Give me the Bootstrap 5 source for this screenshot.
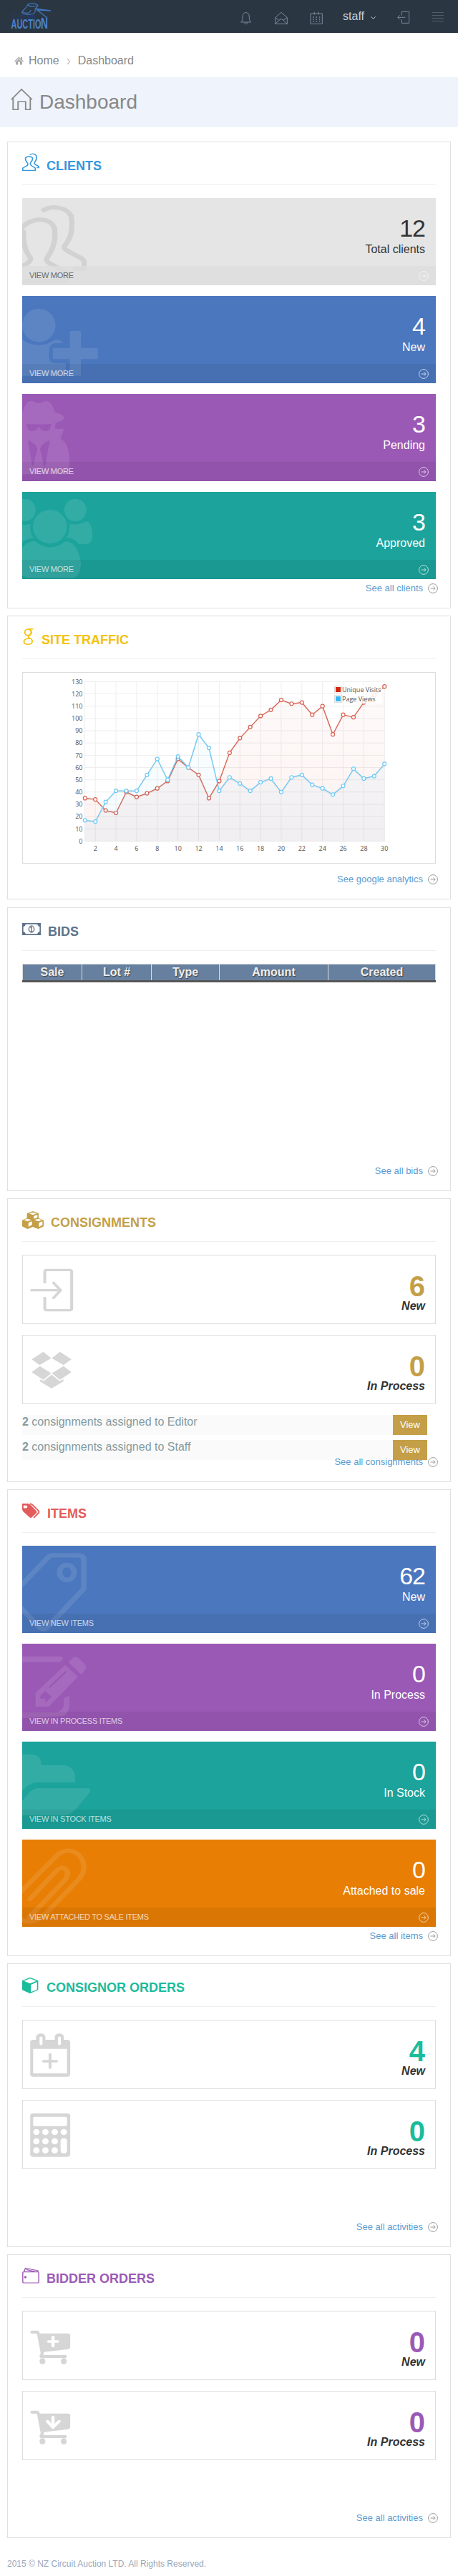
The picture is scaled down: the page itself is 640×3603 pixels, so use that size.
<!DOCTYPE html>
<html lang="en">
<head>
<meta charset="utf-8">
<meta name="viewport" content="width=device-width, initial-scale=1">
<title>Dashboard</title>
<link href="https://cdn.jsdelivr.net/npm/bootstrap@5.3.0/dist/css/bootstrap.min.css" rel="stylesheet">
<style>
body{font-family:"Liberation Sans",Arial,sans-serif;font-size:16px;color:#333;background:#fff}
a{text-decoration:none}
svg{display:block;flex:none}
.topbar{height:46px;background:#2b3643}
.topbar .ic{fill:none;stroke:#7a899c;stroke-width:3;width:20px;height:46px}
.staff{color:#c6cfda;line-height:46px}
.crumbs{height:62px;padding:27px 0 0 20px;color:#888;line-height:24px}
.titlebar{height:70px;background:#eff3fb;color:#888;padding-left:15px;margin-bottom:20px}
.titlebar h1{font-size:28px;line-height:32px;margin:19px 0 0 9px;font-weight:400}
.panel{height:397px;margin:0 10px 10px;border:1px solid #e0e0e0;padding:0 20px}
.panel-tall{height:653px}
.heading{height:60px;border-bottom:1px solid #eee;padding-top:14px;gap:10px}
.heading svg{height:30px}
.heading h2{font-size:18px;line-height:20px;font-weight:700;margin:9px 0 0}
.content{flex:1 1 0;min-height:0;padding-top:18px;gap:15px}
.see{height:39px;flex:none;padding-top:4px;margin-right:-3px;gap:7px;font-size:13px;line-height:16px;color:#5b9bd1;z-index:1}
.see svg{color:#999}
.tile{height:122px;color:#fff;flex:none}
.tile .art{position:absolute;left:0;top:0;width:120px;height:122px;fill:#fff;stroke:#fff;stroke-width:0;opacity:.1}
.tile .num{font-size:34px;line-height:34px;letter-spacing:-1px;padding:25px 15px 0 0}
.tile .lab{line-height:20px;padding:3px 15px 0 0;height:36px}
.tile .more{height:27px;line-height:27px;font-size:11px;letter-spacing:-.27px;padding:0 10px;background:rgba(0,0,0,.06)}
.tile .more>*{opacity:.7}
.blue{background:#4b77be}.purple{background:#9b59b6}.teal{background:#1ba39c}.orange{background:#e87e04}
.gray{background:#e5e5e5;color:#333}
.gray .art{fill:#000;stroke:#000;opacity:.08}
.gray .more{background:rgba(221,221,221,.8)}
.gray .more svg{color:#fff}
.box{height:97px;border:1px solid #ddd;flex:none}
.box svg{width:100px;height:95px;fill:#d6d6d6;stroke:#d6d6d6;stroke-width:0}
.box .num{font-size:40px;line-height:40px;font-weight:700;padding:23px 14px 0 0}
.box .lab{line-height:20px;font-weight:700;font-style:italic;margin-top:-2px;padding-right:14px}
.assign{height:28px;margin-bottom:7px;color:#859ba0}
.assign span{background:#fafafa;line-height:20px;flex:1}
.assign .view{width:48px;margin-right:12px;background:#c49f47;color:#fff;font-size:13px;line-height:27px;text-align:center}
.bids th{height:23px;background:#67809f;color:#eee;text-align:center;line-height:22px;padding:0;border-left:1px solid #ddd;text-shadow:1px 1px 1px #444}
.bids{border-top:1px solid #ddd;border-right:1px solid #ddd;border-bottom:3px solid #555;table-layout:fixed;margin:0}
.chart{height:268px;border:1px solid #ddd}
.chart text{font:9px "Open Sans",sans-serif;fill:#545454}
.copy{font-size:12px;line-height:20px;color:#98a6ba;padding:16px 0 0 10px;height:43px}
</style>
</head>
<body>
<svg width="0" height="0" class="position-absolute">
<symbol id="go" viewBox="0 0 14 14"><g fill="none" stroke="currentColor"><circle cx="7" cy="7" r="6.4"/><path d="M3.5 7H10M7.5 4.3 10.2 7 7.5 9.7"/></g></symbol>
</svg>

<header class="topbar d-flex align-items-start">
  <svg width="75" height="46" viewBox="0 0 75 46" class="me-auto">
    <text x="17" y="27" font-family="Liberation Serif" font-style="italic" font-size="12" fill="#1f3d78">Circuit</text>
    <g fill="none" stroke="#4173b5" stroke-width="1.2"><path d="M39 6C44 4 52 5 53 8L49 13C50 17 48 20 43 20C36 21 29 19 31 16C33 13 36 13 39 6ZM39 6C40 10 48 9 53 8M31 16C34 19 42 20 43 14"/><path d="M49 12 71 15 52 14 66 25" stroke-width="1.5"/></g>
    <text x="15.500" y="40" font-family="Liberation Sans" font-weight="700" font-size="17.500" fill="#4b82cc" textLength="42" lengthAdjust="spacingAndGlyphs">AUCTIO</text>
    <text x="57" y="40" font-family="Liberation Sans" font-weight="700" font-size="22" fill="#4b82cc" textLength="10" lengthAdjust="spacingAndGlyphs">N</text>
  </svg>
  <svg class="ic" viewBox="24 -18 60 138"><path d="M32 75C40 68 39 62 39 51Q40 35 53 35T67 51C67 62 66 68 74 75ZM46 76Q53 90 60 76"/></svg>
  <svg class="ic" viewBox="171 -18 60 138" style="margin-left:29px"><path d="M176 56 201 34 226 56V82H176ZM176 56 192 67 201 61 210 67 226 56M176 82 192 67M226 82 210 67"/></svg>
  <svg class="ic" viewBox="318 -18 60 138" style="margin-left:29px"><path d="M324 39H373V82H324ZM340 32V44M357 32V44"/><path d="M333 54H365M333 63H365M333 72H365" stroke-width="4" stroke-dasharray="5 8"/></svg>
  <span class="staff" style="margin-left:27px">staff</span>
  <svg width="8" height="46" viewBox="576 -18 24 138" style="margin-left:9px"><path d="M578 52 587 61 596 52" fill="none" stroke="#c6cfda" stroke-width="3"/></svg>
  <svg class="ic" viewBox="687 -18 60 138" style="margin-left:28px"><path d="M709 47V31H740V79H709V64M724 55H692M701 46 692 55 701 64"/></svg>
  <svg width="16" height="46" viewBox="0 0 16 46" style="margin:0 20px 0 30px"><path d="M0 17.500H16M0 21.500H16M0 25.500H16M0 29.500H16" stroke="#515e6d"/></svg>
</header>

<nav class="crumbs d-flex">
  <svg width="14" height="24" viewBox="0 0 14 24" style="margin-right:6px"><path d="M0 12.500 6.500 6.500 9 9V7H11V10.500L13 12.500 12 13.500 6.500 8.500 1 13.500ZM2 13.500 6.500 9.500 11 13.500V17.500H8V13.500H5V17.500H2Z" fill="#aaa"/></svg>
  <span>Home</span>
  <svg width="6" height="24" viewBox="0 0 6 24" style="margin:0 10px"><path d="M1 9 4.500 13 1 17" fill="none" stroke="#999"/></svg>
  <span>Dashboard</span>
</nav>
<div class="titlebar d-flex">
  <svg width="31" height="70" viewBox="36 324 76 210" preserveAspectRatio="none"><path d="M38 418 73 375 109 418M44 412V460H61V427H87V460H103V412" fill="none" stroke="#888" stroke-width="4.500"/></svg>
  <h1>Dashboard</h1>
</div>

<section class="panel panel-tall d-flex flex-column">
  <div class="heading d-flex" style="color:#3598dc">
    <svg width="24" viewBox="76 641 59 90" preserveAspectRatio="none"><g fill="none" stroke="currentColor" stroke-width="4"><path d="M78 717V707L93 697Q98 692 93 684C83 668 86 659 99 659C113 659 116 668 105 684Q102 692 108 697L121 707V717Z"/><path d="M102 652C112 644 127 646 125 667Q124 677 118 685Q117 690 122 693L133 700V706H126"/></g></svg>
    <h2>CLIENTS</h2>
  </div>
  <div class="content d-flex flex-column">
    <div class="tile gray position-relative text-end overflow-hidden">
      <svg class="art" viewBox="76 51 294 366" preserveAspectRatio="none"><g fill="none" stroke-width="18"><path d="M144 106C175 78 225 88 243 125Q247 140 246 160C246 205 238 225 222 250C215 262 225 268 235 275L280 305Q288 312 288 322V348H250"/><path d="M66 190C95 130 175 125 187 180C190 220 188 250 165 295C155 312 160 318 170 325L220 358Q230 365 230 380Q230 400 220 400H66M80 185C80 240 85 270 102 297C112 315 95 325 70 341"/></g></svg>
      <div class="num">12</div><div class="lab">Total clients</div>
      <div class="more d-flex align-items-center justify-content-between position-relative"><span>VIEW MORE</span><svg width="14" height="14"><use href="#go"/></svg></div>
    </div>
    <div class="tile blue position-relative text-end overflow-hidden">
      <svg class="art" viewBox="76 462 294 366" preserveAspectRatio="none"><ellipse cx="133" cy="585" rx="57" ry="70"/><path d="M76 645Q133 692 190 645Q205 645 218 660H190Q168 662 168 690V720Q168 745 190 745H225V797H76Z"/><path d="M243 609H273Q277 609 277 614V681H331Q335 681 335 686V722Q335 727 331 727H277V797H239V727H185Q181 727 181 722V686Q181 681 185 681H239V614Q239 609 243 609"/></svg>
      <div class="num">4</div><div class="lab">New</div>
      <div class="more d-flex align-items-center justify-content-between position-relative"><span>VIEW MORE</span><svg width="14" height="14"><use href="#go"/></svg></div>
    </div>
    <div class="tile purple position-relative text-end overflow-hidden">
      <svg class="art" viewBox="76 33 294 366" preserveAspectRatio="none"><path fill-rule="evenodd" d="M76 115C85 80 92 63 107 63C120 63 120 72 133 72S147 63 160 63C175 66 183 90 188 112C205 115 219 122 219 134C219 143 205 150 190 152Q190 165 188 180H219L207 221C232 235 238 280 238 320V370H76ZM90 158Q133 163 176 158Q174 190 155 189Q142 190 133 168Q125 190 112 189Q92 190 90 158ZM95 228Q125 240 128 265L112 340ZM171 228Q140 240 137 265L153 345Z"/></svg>
      <div class="num">3</div><div class="lab">Pending</div>
      <div class="more d-flex align-items-center justify-content-between position-relative"><span>VIEW MORE</span><svg width="14" height="14"><use href="#go"/></svg></div>
    </div>
    <div class="tile teal position-relative text-end overflow-hidden">
      <svg class="art" viewBox="76 444 294 366" preserveAspectRatio="none"><ellipse cx="85" cy="520" rx="37" ry="47"/><ellipse cx="258" cy="520" rx="38" ry="47"/><ellipse cx="171" cy="590" rx="58" ry="71"/><path d="M76 680Q95 648 120 651Q171 702 225 651C265 655 275 720 277 745Q275 800 250 805H92L76 795ZM76 582Q90 582 105 578Q100 610 115 638Q90 640 76 655ZM238 578Q270 585 298 567C312 575 316 600 316 635Q312 663 295 663H270Q255 638 228 636Q240 610 238 578Z"/></svg>
      <div class="num">3</div><div class="lab">Approved</div>
      <div class="more d-flex align-items-center justify-content-between position-relative"><span>VIEW MORE</span><svg width="14" height="14"><use href="#go"/></svg></div>
    </div>
  </div>
  <a class="see d-flex justify-content-end">See all clients<svg width="14" height="14" style="margin-top:1px"><use href="#go"/></svg></a>
</section>

<section class="panel d-flex flex-column">
  <div class="heading d-flex" style="color:#f4c20d">
    <svg width="17" viewBox="76 48 42 90" preserveAspectRatio="none"><g fill="none" stroke="currentColor" stroke-width="4.500"><ellipse cx="96" cy="73" rx="11" ry="13"/><path d="M97 59H114M104 61Q114 74 101 86Q93 91 101 97Q111 102 111 111Q110 124 96 124T82 111Q83 99 103 99"/></g></svg>
    <h2>SITE TRAFFIC</h2>
  </div>
  <div class="content">
    <div class="chart"><svg id="plot" width="576" height="266" viewBox="32 941 576 266"></svg></div>
  </div>
  <a class="see d-flex justify-content-end">See google analytics<svg width="14" height="14" style="margin-top:1px"><use href="#go"/></svg></a>
</section>

<section class="panel d-flex flex-column" style="margin-top:11px">
  <div class="heading d-flex" style="color:#5e738b">
    <svg width="26" viewBox="76 132 64 90" preserveAspectRatio="none"><path fill="currentColor" fill-rule="evenodd" d="M76 153H140V204H76ZM88 158Q87 166 80 169V188Q87 191 88 199H128Q129 191 136 188V169Q129 166 128 158Z"/><ellipse cx="108" cy="178.500" rx="9" ry="14" fill="none" stroke="currentColor" stroke-width="3.500"/><path d="M104 173 108 169V188M104 188H112" fill="none" stroke="currentColor" stroke-width="3.500"/></svg>
    <h2>BIDS</h2>
  </div>
  <div class="content">
    <table class="bids w-100">
      <thead><tr><th style="width:83px">Sale</th><th style="width:97px">Lot #</th><th style="width:95px">Type</th><th style="width:152px">Amount</th><th>Created</th></tr></thead>
    </table>
  </div>
  <a class="see d-flex justify-content-end">See all bids<svg width="14" height="14" style="margin-top:1px"><use href="#go"/></svg></a>
</section>

<section class="panel d-flex flex-column">
  <div class="heading d-flex" style="color:#c49f47">
    <svg width="30" viewBox="76 213 72 90" preserveAspectRatio="none"><path fill="currentColor" d="M112 222 131 231V251L148 260V286L130 297 112 288 94 297 76 286V260L92 251V231Z"/><path fill="#fff" d="M112 227 125 232 112 238 99 232ZM127 237V249L115 254V242ZM94 254 107 259 94 265 81 259ZM109 265V279L97 288V271ZM130 254 143 259 130 265 117 259ZM144 265V280L132 289V271Z"/></svg>
    <h2>CONSIGNMENTS</h2>
  </div>
  <div class="content d-flex flex-column">
    <div class="box d-flex justify-content-between text-end">
      <svg viewBox="78 408 245 285" preserveAspectRatio="none"><path fill="none" stroke-width="10" d="M153 525V475Q153 469 160 469H238Q245 469 245 477V630Q245 638 238 638H160Q153 638 153 630V582"/><path fill="none" stroke-width="10" stroke-linecap="round" d="M108 554H205M183 523 207 554 183 586"/></svg>
      <div><div class="num" style="color:#c49f47">6</div><div class="lab">New</div></div>
    </div>
    <div class="box d-flex justify-content-between text-end">
      <svg viewBox="78 744 245 285" preserveAspectRatio="none"><path d="M108 844 148 812 175 839 135 868ZM244 844 205 812 177 839 217 868ZM108 898 136 872 175 902 148 930ZM244 898 217 872 177 902 205 930ZM136 928 149 935 176 908 204 935 217 928V936L176 966 136 936Z"/></svg>
      <div><div class="num" style="color:#c49f47">0</div><div class="lab">In Process</div></div>
    </div>
    <div>
      <div class="assign d-flex"><span><b>2</b> consignments assigned to Editor</span><a class="view">View</a></div>
      <div class="assign d-flex"><span><b>2</b> consignments assigned to Staff</span><a class="view">View</a></div>
    </div>
  </div>
  <a class="see d-flex justify-content-end">See all consignments<svg width="14" height="14" style="margin-top:1px"><use href="#go"/></svg></a>
</section>

<section class="panel panel-tall d-flex flex-column">
  <div class="heading d-flex" style="color:#e35b5a">
    <svg width="25" viewBox="76 114 62 90" preserveAspectRatio="none"><path fill="currentColor" fill-rule="evenodd" d="M76 129H96Q102 130 106 136L126 161Q128 165 126 168L108 188Q105 190 102 187L79 162Q76 158 76 150ZM87 137A5 6 0 1 0 87 148A5 6 0 1 0 87 137Z"/><path fill="none" stroke="currentColor" stroke-width="5" d="M103 130Q109 130 113 136L133 160Q135 165 133 168L116 189"/></svg>
    <h2>ITEMS</h2>
  </div>
  <div class="content d-flex flex-column">
    <div class="tile blue position-relative text-end overflow-hidden">
      <svg class="art" viewBox="76 306 294 366" preserveAspectRatio="none"><path fill="none" stroke-width="19" d="M66 480 165 355Q170 346 180 346H270Q287 348 287 365V480Q287 488 280 495L165 645Q148 665 132 645L66 560"/><ellipse cx="229" cy="418" rx="25" ry="31" fill="none" stroke-width="19"/></svg>
      <div class="num">62</div><div class="lab">New</div>
      <div class="more d-flex align-items-center justify-content-between position-relative"><span>VIEW NEW ITEMS</span><svg width="14" height="14"><use href="#go"/></svg></div>
    </div>
    <div class="tile purple position-relative text-end overflow-hidden">
      <svg class="art" viewBox="76 717 294 366" preserveAspectRatio="none"><path fill-rule="evenodd" d="M76 770H200Q215 772 216 779L206 795H76ZM223 806 267 856 167 981H122V923ZM155 915 177 940 155 965V948H138V936ZM167 897 225 830 228 837 171 903ZM234 794 252 774Q260 768 268 776L292 805Q297 815 292 825L278 847ZM219 945 238 935V965Q238 1000 220 1020L76 1030V1005H190Q219 1000 219 965Z"/></svg>
      <div class="num">0</div><div class="lab">In Process</div>
      <div class="more d-flex align-items-center justify-content-between position-relative"><span>VIEW IN PROCESS ITEMS</span><svg width="14" height="14"><use href="#go"/></svg></div>
    </div>
    <div class="tile teal position-relative text-end overflow-hidden">
      <svg class="art" viewBox="76 108 294 366" preserveAspectRatio="none"><path d="M76 161H105Q140 161 142 207H218Q255 212 257 255V279H130Q100 280 76 315ZM76 358Q105 303 132 303H300Q313 305 308 320L262 388Q240 420 215 418H76Z"/></svg>
      <div class="num">0</div><div class="lab">In Stock</div>
      <div class="more d-flex align-items-center justify-content-between position-relative"><span>VIEW IN STOCK ITEMS</span><svg width="14" height="14"><use href="#go"/></svg></div>
    </div>
    <div class="tile orange position-relative text-end overflow-hidden">
      <svg class="art" viewBox="76 519 294 366" preserveAspectRatio="none"><path fill="none" stroke-width="18" stroke-linecap="round" d="M66 745 195 585C230 545 288 570 287 640Q285 665 270 685L150 838Q110 880 66 850M103 768 192 652Q208 630 224 642Q238 660 225 685L100 845"/></svg>
      <div class="num">0</div><div class="lab">Attached to sale</div>
      <div class="more d-flex align-items-center justify-content-between position-relative"><span>VIEW ATTACHED TO SALE ITEMS</span><svg width="14" height="14"><use href="#go"/></svg></div>
    </div>
  </div>
  <a class="see d-flex justify-content-end">See all items<svg width="14" height="14" style="margin-top:1px"><use href="#go"/></svg></a>
</section>

<section class="panel d-flex flex-column">
  <div class="heading d-flex" style="color:#1bbc9b">
    <svg width="24" viewBox="76 93 59 90" preserveAspectRatio="none"><path fill="currentColor" fill-rule="evenodd" d="M103 107 131 121V160L103 175 76 160V121ZM103 112 82 122 103 133 125 122ZM127 127 106 138V169L127 158Z"/></svg>
    <h2>CONSIGNOR ORDERS</h2>
  </div>
  <div class="content d-flex flex-column">
    <div class="box d-flex justify-content-between text-end">
      <svg viewBox="78 289 245 285" preserveAspectRatio="none"><path fill-rule="evenodd" d="M112 370H123V357C125 339 154 339 155 357V370H187V357C189 339 217 339 218 357V370H230Q240 371 240 382V513Q240 525 230 525H112Q103 524 103 513V382Q103 371 112 370ZM113 408V511H229V408ZM135 360V389Q140 397 145 389V360Q140 353 135 360ZM198 360V389Q203 397 208 389V360Q203 353 198 360Z"/><path stroke-width="10" stroke-linecap="round" d="M149 460H193M171 431V487"/></svg>
      <div><div class="num" style="color:#1bbc9b">4</div><div class="lab">New</div></div>
    </div>
    <div class="box d-flex justify-content-between text-end">
      <svg viewBox="78 625 245 285" preserveAspectRatio="none"><rect x="103" y="679" width="137" height="182" rx="10"/><g fill="#fff"><rect x="113" y="693" width="116" height="39" rx="5"/><ellipse cx="124" cy="757" rx="11" ry="13"/><ellipse cx="155" cy="757" rx="11" ry="13"/><ellipse cx="187" cy="757" rx="11" ry="13"/><ellipse cx="218" cy="757" rx="11" ry="13"/><ellipse cx="124" cy="796" rx="11" ry="13"/><ellipse cx="155" cy="796" rx="11" ry="13"/><ellipse cx="187" cy="796" rx="11" ry="13"/><ellipse cx="124" cy="834" rx="11" ry="13"/><ellipse cx="155" cy="834" rx="11" ry="13"/><ellipse cx="187" cy="834" rx="11" ry="13"/><rect x="207" y="783" width="22" height="64" rx="11"/></g></svg>
      <div><div class="num" style="color:#1bbc9b">0</div><div class="lab">In Process</div></div>
    </div>
  </div>
  <a class="see d-flex justify-content-end">See all activities<svg width="14" height="14" style="margin-top:1px"><use href="#go"/></svg></a>
</section>

<section class="panel d-flex flex-column">
  <div class="heading d-flex" style="color:#9b59b6">
    <svg width="24" viewBox="76 204 59 90" preserveAspectRatio="none"><g fill="none" stroke="currentColor" stroke-width="3.500"><rect x="78" y="233" width="55" height="46" rx="4"/><path d="M82 232 87 217 130 228V233M90 223 120 232"/></g><ellipse cx="87" cy="255" rx="4" ry="5" fill="currentColor"/></svg>
    <h2>BIDDER ORDERS</h2>
  </div>
  <div class="content d-flex flex-column">
    <div class="box d-flex justify-content-between text-end">
      <svg viewBox="78 400 245 285" preserveAspectRatio="none"><g id="cart"><path d="M109 480H128Q134 481 136 492H233Q240 493 240 500V547Q240 556 233 558L150 570 148 583H224Q229 584 229 589T224 595H140Q134 594 135 586L139 575 126 493H109Q103 492 103 487T109 480Z"/><ellipse cx="145" cy="609" rx="10" ry="13"/><ellipse cx="218" cy="609" rx="10" ry="13"/></g><path d="M166 526H197M181 507V545" stroke="#fff" stroke-width="11" stroke-linecap="round"/></svg>
      <div><div class="num" style="color:#9b59b6">0</div><div class="lab">New</div></div>
    </div>
    <div class="box d-flex justify-content-between text-end">
      <svg viewBox="78 400 245 285" preserveAspectRatio="none"><use href="#cart"/><path d="M181 507V550M162 525 181 550 202 525" fill="none" stroke="#fff" stroke-width="11" stroke-linecap="round"/></svg>
      <div><div class="num" style="color:#9b59b6">0</div><div class="lab">In Process</div></div>
    </div>
  </div>
  <a class="see d-flex justify-content-end">See all activities<svg width="14" height="14" style="margin-top:1px"><use href="#go"/></svg></a>
</section>

<footer class="copy">2015 © NZ Circuit Auction LTD. All Rights Reserved.</footer>

<script src="https://cdn.jsdelivr.net/npm/bootstrap@5.3.0/dist/js/bootstrap.bundle.min.js"></script>
<script>
// Daily traffic, day 1 to day 30
const visits=[35,34,25,23,40,36,39,43,49,67,60,54,35,49,72,84,93,102,107,115,112,113,103,110,87,103,101,113,119,126];
const views=[17,16,32,41,41,41,54,67,50,69,60,87,76,41,52,47,41,48,51,40,52,54,46,43,38,45,59,51,53,63];
const X=d=>118.8+(d-1)*14.43, Y=v=>1176.5-v*1.7165;
let s='<defs><linearGradient id="rg" x1="0" y1="0" x2="0" y2="1"><stop offset="0" stop-color="#d12610" stop-opacity=".02"/><stop offset="1" stop-color="#d12610" stop-opacity=".06"/></linearGradient><linearGradient id="bg" x1="0" y1="0" x2="0" y2="1"><stop offset="0" stop-color="#37b7f3" stop-opacity=".03"/><stop offset="1" stop-color="#37b7f3" stop-opacity=".06"/></linearGradient></defs>';
for(let v=0;v<=130;v+=10)s+=`<path d="M118 ${Y(v)}H538" stroke="#eee"/><text x="115.500" y="${Y(v)+3.3}" text-anchor="end">${v}</text>`;
for(let d=2;d<=30;d+=2)s+=`<path d="M${X(d)} 953V1177" stroke="#eee"/><text x="${X(d)}" y="1190" text-anchor="middle">${d}</text>`;
s+='<path d="M118.500 953V1177" stroke="#eee"/>';
for(const [data,c,g] of [[visits,'#d9604f','rg'],[views,'#6cc9f5','bg']]){
  const p=data.map((v,i)=>X(i+1).toFixed(1)+' '+Y(v).toFixed(1));
  s+=`<path d="M${X(1)} ${Y(0)}L${p.join('L')}V${Y(0)}Z" fill="url(#${g})"/><path d="M${p.join('L')}" fill="none" stroke="#000" stroke-opacity=".05" stroke-width="2" transform="translate(0 1)"/><path d="M${p.join('L')}" fill="none" stroke="${c}" stroke-width="1.3"/>`;
  data.forEach((v,i)=>s+=`<circle cx="${X(i+1)}" cy="${Y(v)}" r="2.500" fill="#fff" stroke="${c}" stroke-width="1.200"/>`);
}
s+='<rect x="467" y="958" width="67" height="26" fill="#fff" opacity=".85"/>';
[['#d12610','Unique Visits',959.5],['#37b7f3','Page Views',972.5]].forEach(([c,t,y])=>s+=`<rect x="467.500" y="${y}" width="10" height="10" fill="#fff" stroke="#ddd"/><rect x="469" y="${y+1.5}" width="7" height="7" fill="${c}"/><text x="478" y="${y+8}">${t}</text>`);
document.getElementById('plot').innerHTML=s;
</script>
</body>
</html>
